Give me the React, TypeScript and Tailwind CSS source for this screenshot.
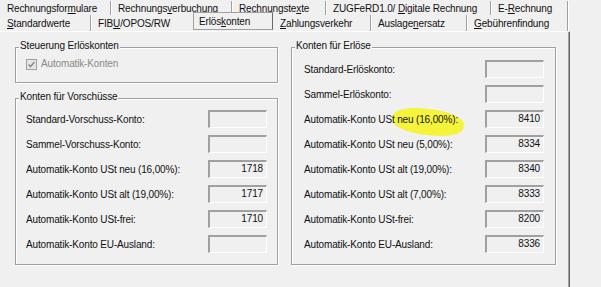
import React from "react";

type Tab = { w: number; pre: string; u: string; post: string; sep?: boolean; active?: boolean };

const topTabs: Tab[] = [
  { w: 111, pre: "Rechnungsfor", u: "m", post: "ulare", sep: true },
  { w: 121, pre: "Rechnungs", u: "v", post: "erbuchung", sep: true },
  { w: 94, pre: "Rechnungste", u: "x", post: "te", sep: true },
  { w: 165, pre: "ZUGFeRD1.0/ ", u: "D", post: "igitale Rechnung", sep: true },
  { w: 77, pre: "E-", u: "R", post: "echnung", sep: true },
];

const bottomTabs: Tab[] = [
  { w: 91, pre: "", u: "S", post: "tandardwerte", sep: true },
  { w: 102, pre: "FIB", u: "U", post: "/OPOS/RW" },
  { w: 80, pre: "Erlös", u: "k", post: "onten", active: true },
  { w: 98, pre: "", u: "Z", post: "ahlungsverkehr", sep: true },
  { w: 96, pre: "Auslage", u: "n", post: "ersatz", sep: true },
  { w: 101, pre: "", u: "G", post: "ebührenfindung", sep: true },
];

const vorschussRows = [
  { label: "Standard-Vorschuss-Konto:", value: "" },
  { label: "Sammel-Vorschuss-Konto:", value: "" },
  { label: "Automatik-Konto USt neu (16,00%):", value: "1718" },
  { label: "Automatik-Konto USt alt (19,00%):", value: "1717" },
  { label: "Automatik-Konto USt-frei:", value: "1710" },
  { label: "Automatik-Konto EU-Ausland:", value: "" },
];

const erloesRows = [
  { label: "Standard-Erlöskonto:", value: "" },
  { label: "Sammel-Erlöskonto:", value: "" },
  { label: "Automatik-Konto USt neu (16,00%):", value: "8410", marked: true },
  { label: "Automatik-Konto USt neu (5,00%):", value: "8334" },
  { label: "Automatik-Konto USt alt (19,00%):", value: "8340" },
  { label: "Automatik-Konto USt alt (7,00%):", value: "8333" },
  { label: "Automatik-Konto USt-frei:", value: "8200" },
  { label: "Automatik-Konto EU-Ausland:", value: "8336" },
];

const TabLabel = ({ tab }: { tab: Tab }) => (
  <span className="whitespace-nowrap">
    {tab.pre}
    <u className="underline underline-offset-[1px]">{tab.u}</u>
    {tab.post}
  </span>
);

const TabRow = ({ tabs, rowClass }: { tabs: Tab[]; rowClass: string }) => (
  <div className={`flex ${rowClass}`}>
    {tabs.map(tab =>
      tab.active ? (
        <div
          key={tab.u}
          style={{ width: tab.w }}
          className="-mt-[3px] h-[18px] flex items-center pl-[5px] border border-[#a0a0a0] border-r-[#696969] bg-[#f0f0f0]"
        >
          <TabLabel tab={tab} />
        </div>
      ) : (
        <div
          key={tab.u}
          style={{ width: tab.w }}
          className={`h-full flex items-center pl-[7px] ${
            tab.sep ? "border-r border-[#a0a0a0] shadow-[1px_0_0_#ffffff]" : ""
          }`}
        >
          <TabLabel tab={tab} />
        </div>
      )
    )}
  </div>
);

const Field = ({ value }: { value: string }) => (
  <div className="w-[59px] h-[18px] shrink-0 border-t-2 border-l-2 border-t-[#a0a0a0] border-l-[#a0a0a0] border-b border-r border-b-white border-r-white bg-[#f0f0f0] text-right pr-[3px] leading-[13px]">
    {value}
  </div>
);

const GroupBox = ({ title, className, children }: { title: string; className: string; children: React.ReactNode }) => (
  <div
    className={`relative border border-[#a0a0a0] shadow-[inset_1px_1px_0_#ffffff,1px_1px_0_#ffffff] ${className}`}
  >
    <span className="absolute left-[3px] -top-[8px] px-[1px] bg-[#f0f0f0] leading-[12px] whitespace-nowrap">
      {title}
    </span>
    {children}
  </div>
);

export default function App() {
  return (
    <div className="w-[601px] h-[287px] overflow-hidden bg-[#f0f0f0] text-[#111] text-[10px] tracking-[-0.15px] font-['Liberation_Sans',Arial,sans-serif]">
      <TabRow tabs={topTabs} rowClass="h-[15px] pt-[1px]" />
      <TabRow tabs={bottomTabs} rowClass="h-[16px]" />

      <div className="w-[570px] h-[256px] border-t border-t-white border-r border-r-[#696969] shadow-[inset_-1px_0_0_#a0a0a0] flex gap-[13px] pl-[15px]">
        {/* linke Spalte */}
        <div className="w-[263px] flex flex-col">
          <GroupBox title="Steuerung Erlöskonten" className="mt-[15px] h-[36px]">
            <div className="flex items-center gap-[4px] pl-[10px] pt-[10px]">
              <div className="w-[11px] h-[11px] border border-[#a0a0a0] bg-[#e6e6e6] flex items-center justify-center">
                <svg width="9" height="9" viewBox="0 0 9 9">
                  <path d="M1.5 4.5 L3.5 6.5 L7.5 2" fill="none" stroke="#8c8c8c" strokeWidth="1.6" />
                </svg>
              </div>
              <span className="text-[#8a8a8a] leading-[12px]">Automatik-Konten</span>
            </div>
          </GroupBox>

          <GroupBox title="Konten für Vorschüsse" className="mt-[15px] h-[167px]">
            <div className="flex flex-col gap-[7px] pt-[11px] pl-[10px] pr-[10px]">
              {vorschussRows.map(row => (
                <div key={row.label} className="flex items-center justify-between h-[18px]">
                  <span className="whitespace-nowrap">{row.label}</span>
                  <Field value={row.value} />
                </div>
              ))}
            </div>
          </GroupBox>
        </div>

        {/* rechte Spalte */}
        <div className="w-[265px] flex flex-col">
          <GroupBox title="Konten für Erlöse" className="mt-[15px] h-[218px]">
            <div className="flex flex-col gap-[7px] pt-[12px] pl-[12px] pr-[11px]">
              {erloesRows.map(row => (
                <div key={row.label} className="flex items-center justify-between h-[18px]">
                  <span className="relative whitespace-nowrap">
                    {/* Textmarker */}
                    {row.marked && (
                      <span className="absolute left-[88px] -top-[3px] w-[72px] h-[26px] rounded-[45%] bg-[#f5f33a] rotate-[7deg]" />
                    )}
                    <span className="relative">{row.label}</span>
                  </span>
                  <Field value={row.value} />
                </div>
              ))}
            </div>
          </GroupBox>
        </div>
      </div>
    </div>
  );
}
